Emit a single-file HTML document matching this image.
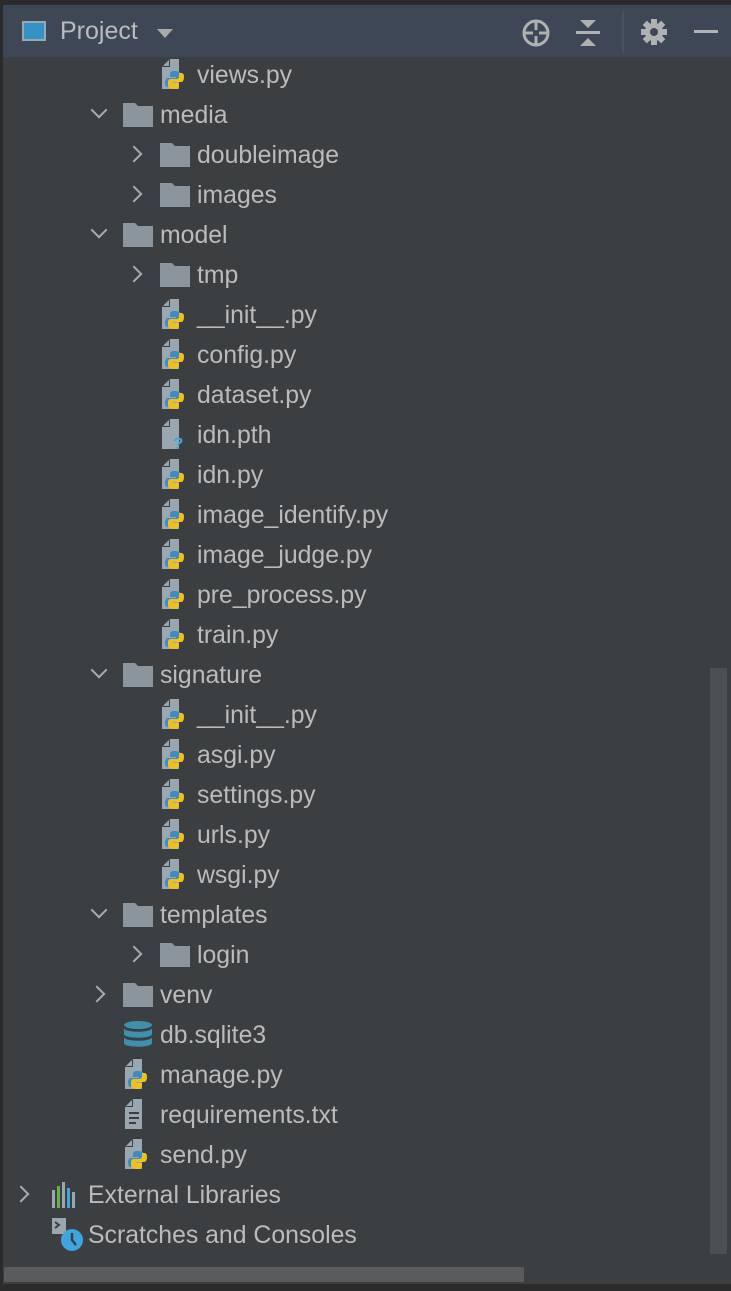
<!DOCTYPE html>
<html><head><meta charset="utf-8"><style>
body{margin:0;width:731px;height:1291px;background:#3c3f41;overflow:hidden;font-family:"Liberation Sans",sans-serif;position:relative}
.top{position:absolute;left:0;top:0;width:731px;height:5px;background:#2b2b2b}
.hdr{position:absolute;left:0;top:5px;width:731px;height:52px;background:#3d4756;border-left:2px solid #2b2b2b;box-sizing:border-box}
.row{position:absolute;height:40px;line-height:40px;color:#bbbbbb;font-size:24.8px;white-space:nowrap}
.ic{position:absolute}
.chev{position:absolute;width:10px;height:10px;border-right:2px solid #a9acaf;border-bottom:2px solid #a9acaf}
.vs{position:absolute;left:710px;top:668px;width:17px;height:586px;background:#4d5052}
.hs{position:absolute;left:4px;top:1267px;width:520px;height:15px;background:#595b5d}
.bot{position:absolute;left:0;top:1284px;width:731px;height:7px;background:#2b2b2b}
.lb{position:absolute;left:0;top:0;width:3px;height:1291px;background:#2b2b2b}
</style></head><body>
<div class="top"></div>
<div class="hdr">
<div style="position:absolute;left:20px;top:16px;width:24px;height:20px;border:2px solid #9aa7b0;box-sizing:border-box;background:#3592c4"></div>
<div style="position:absolute;left:58px;top:12px;font-size:25px;color:#bbbbbb">Project</div>
<div style="position:absolute;left:155px;top:24px;width:0;height:0;border-left:8px solid transparent;border-right:8px solid transparent;border-top:9px solid #aaaaaa"></div>
<svg style="position:absolute;left:518px;top:12px" width="32" height="32" viewBox="0 0 32 32"><circle cx="16" cy="16" r="12" fill="none" stroke="#afb1b3" stroke-width="3"/><path d="M16 4v9M16 19v9M4 16h9M19 16h9" stroke="#afb1b3" stroke-width="3"/></svg>
<svg style="position:absolute;left:572px;top:12px" width="28" height="32" viewBox="0 0 28 32"><path d="M6 3h16l-8 8z M6 29h16l-8-8z" fill="#afb1b3"/><rect x="2" y="14" width="24" height="3" fill="#afb1b3"/></svg>
<div style="position:absolute;left:620px;top:7px;width:2px;height:40px;background:#4a5260"></div>
<svg style="position:absolute;left:638px;top:12px" width="28" height="30" viewBox="0 0 28 30"><g fill="#afb1b3"><circle cx="14" cy="15" r="9"/><rect x="11" y="2" width="6" height="26"/><rect x="1" y="12" width="26" height="6"/><rect x="11" y="2" width="6" height="26" transform="rotate(45 14 15)"/><rect x="11" y="2" width="6" height="26" transform="rotate(-45 14 15)"/></g><circle cx="14" cy="15" r="4" fill="#3d4756"/></svg>
<div style="position:absolute;left:692px;top:25px;width:24px;height:3px;background:#afb1b3"></div>
</div>
<div id="tree"></div>
<script>
const rows=[
[2,'py','views.py'],[1,'fo','media',1],[2,'fc','doubleimage'],[2,'fc','images'],[1,'fo','model'],[2,'fc','tmp'],
[2,'py','__init__.py'],[2,'py','config.py'],[2,'py','dataset.py'],[2,'q','idn.pth'],[2,'py','idn.py'],[2,'py','image_identify.py'],
[2,'py','image_judge.py'],[2,'py','pre_process.py'],[2,'py','train.py'],[1,'fo','signature'],[2,'py','__init__.py'],[2,'py','asgi.py'],
[2,'py','settings.py'],[2,'py','urls.py'],[2,'py','wsgi.py'],[1,'fo','templates'],[2,'fc','login'],[1,'fc','venv'],
[1,'db','db.sqlite3'],[1,'py','manage.py'],[1,'txt','requirements.txt'],[1,'py','send.py'],[0,'ext','External Libraries'],[0,'scr','Scratches and Consoles']];
const fileSvg=(extra)=>`<svg width="28" height="32" viewBox="0 0 28 32"><path d="M9 1h9v30H1V9z" fill="#9aa7b0"/><path d="M1 9h8V1z" fill="#3c3f41"/><path d="M2 8l6-6v6z" fill="#9aa7b0"/>${extra}</svg>`;
const py=`<path d="M13 13c-3 0-4 1-4 4v2h6v1h-8c-2 0-3 2-3 5s1 4 3 4h2v-3c0-2 1-3 3-3h5c2 0 3-1 3-3v-3c0-3-2-4-7-4z" fill="#3d8bc7"/><path d="M14 31c3 0 4-1 4-4v-2h-6v-1h8c2 0 3-2 3-5s-1-4-3-4h-2v3c0 2-1 3-3 3h-5c-2 0-3 1-3 3v3c0 3 2 4 7 4z" fill="#f0c020"/>`;
let h='';
rows.forEach((r,i)=>{
 const top=54+40*i, lvl=r[0], t=r[1];
 let tx = lvl==0?88:(lvl==1?160:197);
 let ix = tx-36;
 if(t=='fo'||t=='fc'){ix=tx-37;}
 if(t=='fo'||t=='fc'){
   const cx=tx-69;
   if(t=='fc') h+=`<div class="chev" style="left:${cx}px;top:${top+14}px;transform:rotate(-45deg)"></div>`;
   else h+=`<div class="chev" style="left:${cx+2}px;top:${top+10}px;transform:rotate(45deg)"></div>`;
  h+=`<svg class="ic" style="left:${ix}px;top:${top+9}px" width="30" height="24" viewBox="0 0 30 24"><path d="M0 0h12l3 3h15v21H0z" fill="#8a959e"/></svg>`;
 } else if(t=='py'){
  h+=`<div class="ic" style="left:${ix}px;top:${top+4}px">${fileSvg(py)}</div>`;
 } else if(t=='q'){
  h+=`<div class="ic" style="left:${ix}px;top:${top+4}px">${fileSvg('<text x="12" y="31" font-size="17" font-weight="bold" fill="#3ea5e0" font-family="Liberation Sans">?</text>')}</div>`;
 } else if(t=='txt'){
  h+=`<div class="ic" style="left:${ix}px;top:${top+4}px">${fileSvg('<rect x="5" y="14" width="10" height="2" fill="#3c3f41"/><rect x="5" y="19" width="10" height="2" fill="#3c3f41"/><rect x="5" y="24" width="7" height="2" fill="#3c3f41"/>')}</div>`;
 } else if(t=='db'){
  h+=`<svg class="ic" style="left:${ix-1}px;top:${top+7}px" width="30" height="28" viewBox="0 0 30 28"><g fill="#3f8fae"><ellipse cx="15" cy="4" rx="14" ry="4"/><path d="M1 7c0 5 28 5 28 0v6c0 5-28 5-28 0z"/><path d="M1 16c0 5 28 5 28 0v6c0 5-28 5-28 0z"/></g></svg>`;
 } else if(t=='ext'){
  h+=`<div class="chev" style="left:15px;top:${top+14}px;transform:rotate(-45deg)"></div>`;
  h+=`<svg class="ic" style="left:52px;top:${top+8}px" width="28" height="26" viewBox="0 0 28 26"><rect x="0" y="8" width="3" height="18" fill="#9aa7b0"/><rect x="5" y="4" width="3" height="22" fill="#62b543"/><rect x="10" y="0" width="3" height="26" fill="#9aa7b0"/><rect x="15" y="6" width="3" height="20" fill="#3ea5e0"/><rect x="20" y="10" width="3" height="16" fill="#9aa7b0"/></svg>`;
 } else if(t=='scr'){
  h+=`<svg class="ic" style="left:52px;top:${top+4}px" width="32" height="34" viewBox="0 0 32 34"><path d="M0 0h14v16H0z" fill="#9aa7b0"/><path d="M3 4l4 3-4 3" stroke="#3c3f41" stroke-width="2" fill="none"/><circle cx="20" cy="22" r="11" fill="#3ea5e0"/><path d="M20 15v7l4 5" stroke="#3c3f41" stroke-width="2.5" fill="none"/></svg>`;
 }
 h+=`<div class="row" style="left:${tx}px;top:${top+2}px">${r[2]}</div>`;
});
document.getElementById('tree').innerHTML=h;
</script>
<div class="vs"></div>
<div class="hs"></div>
<div class="bot"></div>
<div class="lb"></div>
</body></html>
